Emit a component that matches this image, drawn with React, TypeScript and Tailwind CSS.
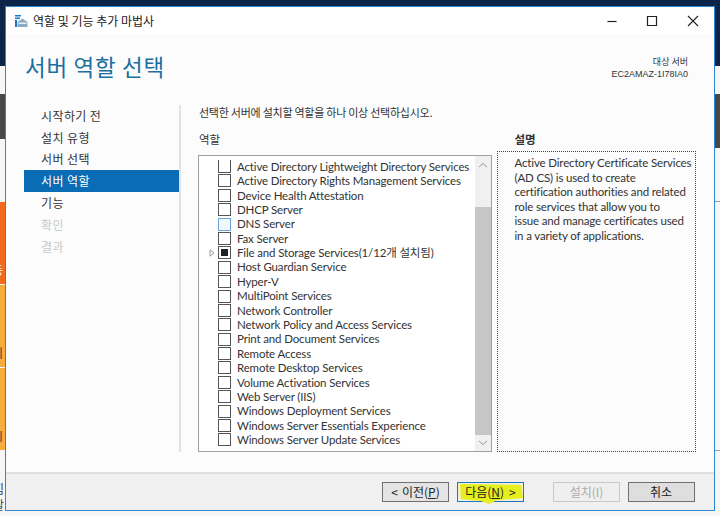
const sans = "font-['Noto_Sans_CJK_KR','Noto_Sans',sans-serif]";

const roles = [
  "Active Directory Lightweight Directory Services",
  "Active Directory Rights Management Services",
  "Device Health Attestation",
  "DHCP Server",
  "DNS Server",
  "Fax Server",
  "File and Storage Services(1/12개 설치됨)",
  "Host Guardian Service",
  "Hyper-V",
  "MultiPoint Services",
  "Network Controller",
  "Network Policy and Access Services",
  "Print and Document Services",
  "Remote Access",
  "Remote Desktop Services",
  "Volume Activation Services",
  "Web Server (IIS)",
  "Windows Deployment Services",
  "Windows Server Essentials Experience",
  "Windows Server Update Services",
];

const steps: [string, string][] = [
  ["시작하기 전", "text-[#333]"],
  ["설치 유형", "text-[#333]"],
  ["서버 선택", "text-[#333]"],
  ["서버 역할", "bg-[#0a6cb4] text-white"],
  ["기능", "text-[#333]"],
  ["확인", "text-[#c8c8c8]"],
  ["결과", "text-[#c8c8c8]"],
];

const desc = [
  "Active Directory Certificate Services",
  "(AD CS) is used to create",
  "certification authorities and related",
  "role services that allow you to",
  "issue and manage certificates used",
  "in a variety of applications.",
];

function Btn({ children, cls }: { children: React.ReactNode; cls: string }) {
  return (
    <div className={`relative flex h-[20px] w-[67px] items-center justify-center border-[1.5px] text-[12px] leading-none ${cls}`}>
      {children}
    </div>
  );
}

export default function App() {
  return (
    <div className={`relative h-[516px] w-[720px] overflow-hidden bg-[#f6f6f6] ${sans}`}>
      {/* desktop behind the window */}
      <div className="absolute left-0 top-0 h-[66px] w-[720px] bg-[#0b2448]" />
      <div className="absolute left-0 top-[94px] h-[45px] w-[10px] bg-[#4a4846]" />
      <div className="absolute right-0 top-[94px] h-[54px] w-[10px] bg-[#4a4846]" />
      <div className="absolute right-0 top-[201px] h-px w-[10px] bg-[#999]" />
      <div className="absolute right-0 top-[450px] h-px w-[10px] bg-[#999]" />
      <div className="absolute left-0 top-[202px] h-[82px] w-[8px] bg-[#f26a1e]" />
      <div className="absolute left-0 top-[285px] h-[82px] w-[8px] bg-[#f7ac3c]" />
      <div className="absolute left-0 top-[368px] h-[82px] w-[8px] bg-[#f7ac3c]" />
      <div className="absolute left-[-8px] top-[264px] text-[12px] leading-none text-white">등</div>
      <div className="absolute left-[-8px] top-[347px] text-[12px] leading-none text-[#444]">비</div>
      <div className="absolute left-[-8px] top-[430px] text-[12px] leading-none text-[#444]">시</div>
      <div className="absolute left-[-7px] top-[483px] text-[12px] leading-none text-[#444]">힘</div>
      <div className="absolute left-[-7px] top-[499px] text-[12px] leading-none text-[#444]">잘</div>

      {/* window */}
      <div className="absolute left-[5px] top-[6px] flex h-[505px] w-[710px] flex-col border-[1.5px] border-[#2f86d0] bg-[#fcfcfc]">
        {/* title bar */}
        <div className="flex h-[27px] shrink-0 items-center bg-white">
          <svg viewBox="0 0 14 14" className="ml-[8px] h-[14px] w-[14px]">
            <path d="M1 1h6v1.4H1zM1 3.6h5v1.3H1zM1 6h2v7H1z" fill="#1b76c4" />
            <path d="M3.5 8 8.5 4.5 13.5 8v5h-10z" fill="#8aa9c2" />
            <path d="M4.5 8.6h8v1.2h-8z" fill="#fff" />
          </svg>
          <span className="ml-[5px] text-[12px] leading-none text-[#222]">역할 및 기능 추가 마법사</span>
          <div className="ml-auto flex items-center">
            <svg viewBox="0 0 14 14" className="mr-[26px] h-[14px] w-[14px]"><path d="M2.5 7.5h9" stroke="#222" strokeWidth="1.2" /></svg>
            <svg viewBox="0 0 14 14" className="mr-[27px] h-[14px] w-[14px]"><path d="M2.5 2.5h9v9h-9z" stroke="#222" strokeWidth="1.2" fill="none" /></svg>
            <svg viewBox="0 0 14 14" className="mr-[14px] h-[14px] w-[14px]"><path d="M2 2l10 10M12 2 2 12" stroke="#222" strokeWidth="1.1" /></svg>
          </div>
        </div>

        {/* header */}
        <div className="flex h-[65px] shrink-0 items-start justify-between pl-[19px] pr-[26px]">
          <div className="mt-[17px] text-[22.5px] leading-[30px] tracking-[0.7px] text-[#1a6f9f]">서버 역할 선택</div>
          <div className="mt-[22px] text-right text-[9px] leading-[12px] text-[#333]">
            <div>대상 서버</div>
            <div className="font-['Liberation_Sans']">EC2AMAZ-1I78IA0</div>
          </div>
        </div>

        {/* body */}
        <div className="flex min-h-0 flex-1">
          <div className="mt-[6px] w-[173px] shrink-0 pl-[18px]">
            {steps.map(([s, c]) => (
              <div key={s} className={`flex h-[21.8px] items-center pl-[17px] text-[12px] leading-none tracking-[0.4px] ${c}`}>{s}</div>
            ))}
          </div>
          <div className="mt-[6px] h-[347px] w-[2px] shrink-0 self-start bg-[#e2e2e2]" />
          <div className="flex min-w-0 flex-1 flex-col pl-[17px]">
            <div className="mt-[3px] h-[21px] pl-[1px] text-[11px] leading-[21px] tracking-[-0.25px] text-[#333]">선택한 서버에 설치할 역할을 하나 이상 선택하십시오.</div>
            <div className="mt-[5px] flex">
              <div className="w-[294px] shrink-0">
                <div className="h-[22px] pl-[1px] text-[11.5px] leading-[22px] text-[#333]">역할</div>
                <div className="mt-[5px] flex h-[297px] border border-[#a0a0a0] bg-white">
                  <div className="min-w-0 flex-1 pl-[7px] pt-[3.3px]">
                    {roles.map((r, i) => (
                      <div key={r} className="flex h-[14.4px] items-center">
                        <span className="flex w-[11px] shrink-0 justify-center">
                          {i === 6 && (
                            <svg viewBox="0 0 6 8" className="h-[8px] w-[6px]"><path d="M1 .8 5 4 1 7.2z" fill="#fff" stroke="#9a9a9a" /></svg>
                          )}
                        </span>
                        <span className={`ml-[1px] flex h-[13px] w-[13px] shrink-0 items-center justify-center border ${i === 4 ? "border-[#6aa5dc] bg-[#f3f8fd]" : "border-[#555]"} ${i === 0 ? "border-t-0" : ""}`}>
                          {i === 6 && <span className="h-[7px] w-[7px] bg-[#222]" />}
                        </span>
                        <span className="ml-[6px] whitespace-nowrap font-['Lato','Noto_Sans_CJK_KR',sans-serif] text-[11.5px] tracking-[-0.15px] leading-none text-[#333]">{r}</span>
                      </div>
                    ))}
                  </div>
                  <div className="flex w-[16px] shrink-0 flex-col bg-[#f0f0f0]">
                    <div className="flex h-[17px] items-center justify-center">
                      <svg viewBox="0 0 10 6" className="h-[6px] w-[10px]"><path d="M1 5 5 1.5 9 5" stroke="#999" fill="none" /></svg>
                    </div>
                    <div className="h-[34px]" />
                    <div className="flex-1 bg-[#c6c6c6]" />
                    <div className="flex h-[16px] items-center justify-center">
                      <svg viewBox="0 0 10 6" className="h-[6px] w-[10px]"><path d="M1 1 5 4.5 9 1" stroke="#999" fill="none" /></svg>
                    </div>
                  </div>
                </div>
              </div>
              <div className="ml-[4.5px] flex w-[199px] shrink-0 flex-col">
                <div className="h-[22px] pl-[18px] text-[11.5px] font-bold leading-[22px] text-[#333]">설명</div>
                <div className="mt-[0.5px] h-[301px] border border-dotted border-[#444] pl-[17px] pt-[4.5px] font-['Lato',sans-serif] text-[11.5px] tracking-[-0.15px] leading-[14.6px] text-[#333]">
                  {desc.map((l) => (
                    <div key={l} className="whitespace-nowrap">{l}</div>
                  ))}
                </div>
              </div>
            </div>
          </div>
        </div>

        {/* footer */}
        <div className="flex h-[38.5px] shrink-0 items-center border-t-2 border-[#e0e0e0] bg-[#f0f0f0] pl-[376px]">
          <Btn cls="border-[#707070] bg-[#e4e4e4] text-[#222]"><span className="mr-[4px]">&lt;</span>이전(<u>P</u>)</Btn>
          <Btn cls="ml-[8px] border-[#1b76c4] bg-[#eef0d8] text-[#222]">
            <svg viewBox="0 0 67 22" className="absolute left-[-1px] top-[0px] h-[22px] w-[67px] overflow-visible">
              <path d="M3 1 64 2 66 15 40 17 32 21 24 18 4 16Z" fill="#e6ee1c" />
            </svg>
            <span className="relative">다음(<u>N</u>)<span className="ml-[5px]">&gt;</span></span>
          </Btn>
          <Btn cls="ml-[29px] border-[#c8c8c8] bg-[#efefef] text-[#aaa]">설치(I)</Btn>
          <Btn cls="ml-[7.5px] border-[#707070] bg-[#dedede] text-[#222]">취소</Btn>
        </div>
      </div>
    </div>
  );
}
